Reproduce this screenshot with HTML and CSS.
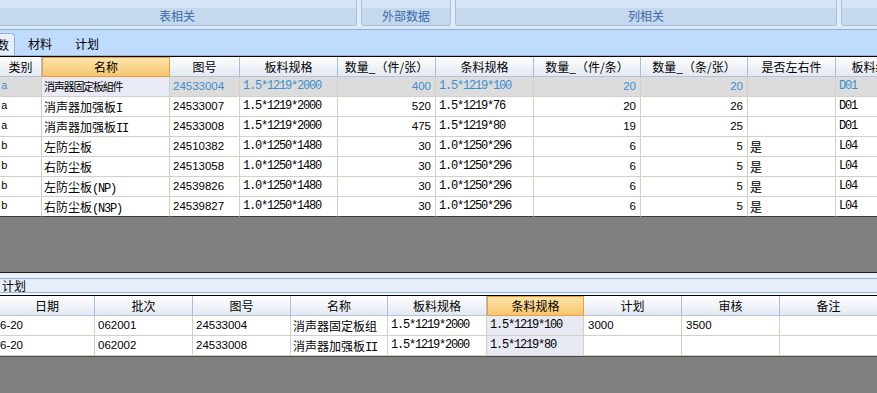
FILE: index.html
```html
<!DOCTYPE html>
<html>
<head>
<meta charset="utf-8">
<link rel="stylesheet" href="styles.css">
</head>
<body>
<div class="ribbon">
  <div class="group g1">表相关</div>
  <div class="group g2">外部数据</div>
  <div class="group g3">列相关</div>
  <div class="group g4"></div>
</div>
<div class="ribbon-foot"></div>
<div class="tabs">
  <div class="tab active"><span>数</span></div>
  <div class="tab t2">材料</div>
  <div class="tab t3">计划</div>
</div>

<div class="grid1">
  <div class="row r1 head">
    <div class="c">类别</div><div class="c sel">名称</div><div class="c">图号</div><div class="c">板料规格</div><div class="c">数量_（件/张）</div><div class="c">条料规格</div><div class="c">数量_（件/条）</div><div class="c">数量_（条/张）</div><div class="c">是否左右件</div><div class="c">板料编号</div>
  </div>
  <div class="row r1 body cur">
    <div class="c m k">a</div><div class="c nm focus">消声器固定板組件</div><div class="c n">24533004</div><div class="c m">1.5*1219*2000</div><div class="c n r">400</div><div class="c m">1.5*1219*100</div><div class="c n r">20</div><div class="c n r">20</div><div class="c"></div><div class="c m d">D01</div>
  </div>
  <div class="row r1 body">
    <div class="c m k">a</div><div class="c nm">消声器加强板<span class="m">I</span></div><div class="c n">24533007</div><div class="c m">1.5*1219*2000</div><div class="c n r">520</div><div class="c m">1.5*1219*76</div><div class="c n r">20</div><div class="c n r">26</div><div class="c"></div><div class="c m d">D01</div>
  </div>
  <div class="row r1 body">
    <div class="c m k">a</div><div class="c nm">消声器加强板<span class="m">II</span></div><div class="c n">24533008</div><div class="c m">1.5*1219*2000</div><div class="c n r">475</div><div class="c m">1.5*1219*80</div><div class="c n r">19</div><div class="c n r">25</div><div class="c"></div><div class="c m d">D01</div>
  </div>
  <div class="row r1 body">
    <div class="c m k">b</div><div class="c nm">左防尘板</div><div class="c n">24510382</div><div class="c m">1.0*1250*1480</div><div class="c n r">30</div><div class="c m">1.0*1250*296</div><div class="c n r">6</div><div class="c n r">5</div><div class="c nm">是</div><div class="c m d">L04</div>
  </div>
  <div class="row r1 body">
    <div class="c m k">b</div><div class="c nm">右防尘板</div><div class="c n">24513058</div><div class="c m">1.0*1250*1480</div><div class="c n r">30</div><div class="c m">1.0*1250*296</div><div class="c n r">6</div><div class="c n r">5</div><div class="c nm">是</div><div class="c m d">L04</div>
  </div>
  <div class="row r1 body">
    <div class="c m k">b</div><div class="c nm">左防尘板<span class="m">(NP)</span></div><div class="c n">24539826</div><div class="c m">1.0*1250*1480</div><div class="c n r">30</div><div class="c m">1.0*1250*296</div><div class="c n r">6</div><div class="c n r">5</div><div class="c nm">是</div><div class="c m d">L04</div>
  </div>
  <div class="row r1 body last">
    <div class="c m k">b</div><div class="c nm">右防尘板<span class="m">(N3P)</span></div><div class="c n">24539827</div><div class="c m">1.0*1250*1480</div><div class="c n r">30</div><div class="c m">1.0*1250*296</div><div class="c n r">6</div><div class="c n r">5</div><div class="c nm">是</div><div class="c m d">L04</div>
  </div>
</div>

<div class="gap"></div>

<div class="panel2">
  <div class="cap-top"></div>
  <div class="cap">计划</div>
  <div class="cap-bot"></div>
  <div class="grid2">
    <div class="row r2 head">
      <div class="c">日期</div><div class="c">批次</div><div class="c">图号</div><div class="c">名称</div><div class="c">板料规格</div><div class="c sel">条料规格</div><div class="c">计划</div><div class="c">审核</div><div class="c">备注</div>
    </div>
    <div class="row r2 body">
      <div class="c n p0">6-20</div><div class="c n">062001</div><div class="c n">24533004</div><div class="c nm">消声器固定板组</div><div class="c m">1.5*1219*2000</div><div class="c m col">1.5*1219*100</div><div class="c n p4">3000</div><div class="c n p4">3500</div><div class="c"></div>
    </div>
    <div class="row r2 body">
      <div class="c n p0">6-20</div><div class="c n">062002</div><div class="c n">24533008</div><div class="c nm">消声器加强板<span class="m">II</span></div><div class="c m">1.5*1219*2000</div><div class="c m col">1.5*1219*80</div><div class="c"></div><div class="c"></div><div class="c"></div>
    </div>
  </div>
</div>
</body>
</html>
```

FILE: styles.css
```css
html, body {
  margin: 0;
  padding: 0;
}
body {
  width: 877px;
  height: 393px;
  overflow: hidden;
  background: #808080;
  font-family: "Noto Sans CJK SC", sans-serif;
  font-size: 12px;
  color: #000;
}

/* ribbon */
.ribbon {
  display: flex;
  gap: 4px;
  height: 26px;
  margin-left: -3px;
  background: #e2ecf8;
}
.group {
  box-sizing: border-box;
  height: 26px;
  border: 1px solid #a7c0df;
  border-top: none;
  border-radius: 0 0 3px 3px;
  background: linear-gradient(#d6e5f5 0, #d6e5f5 8px, #c4d8ee 8px);
  color: #3f69a9;
  text-align: center;
  padding-top: 7px;
  line-height: 17px;
  flex: none;
}
.g1 { width: 360px; }
.g2 { width: 90px; }
.g3 { width: 382px; }
.g4 { width: 60px; }

.ribbon-foot {
  height: 3px;
  background: #dde9f6;
  border-bottom: 1px solid #8db0da;
}

/* tabs */
.tabs {
  height: 25px;
  background: #bfdbfe;
  border-bottom: 1px solid #94b4dc;
  display: flex;
  align-items: flex-end;
}
.tab {
  height: 22px;
  line-height: 21px;
  flex: none;
}
.tab.active {
  box-sizing: border-box;
  width: 15px;
  background: #e6effb;
  border: 1px solid #8fb1da;
  border-left: none;
  border-bottom: none;
  border-radius: 0 4px 0 0;
  overflow: hidden;
}
.tab.active span {
  display: block;
  margin-left: -3px;
  white-space: nowrap;
}
.t2 { margin-left: 13px; }
.t3 { margin-left: 23px; }

/* grids */
.grid1 {
  border-top: 1px solid #000;
  overflow: hidden;
  background: #fff;
}
.row {
  display: grid;
  height: 20px;
}
.r1 {
  grid-template-columns: 42px 128px 70px 98px 98px 98px 107px 107px 88px 80px;
}
.r2 {
  grid-template-columns: 95px 98px 98px 97px 99px 97px 98px 98px 98px;
}
.c {
  box-sizing: border-box;
  height: 20px;
  border-right: 1px solid #d4d0c8;
  border-bottom: 1px solid #d4d0c8;
  line-height: 19px;
  white-space: nowrap;
  overflow: hidden;
  padding: 0 2px;
}
.head .c {
  background: linear-gradient(#fefefe, #e3e9f2);
  border-right-color: #a8bfda;
  border-bottom-color: #b3c4d9;
  text-align: center;
  padding: 0;
}
.head .c.sel {
  background: linear-gradient(#fde4aa, #f6c66f);
  border: 1px solid #f19a3e;
  line-height: 18px;
}
.body .c { background: #fff; }
.n {
  font-family: "Liberation Sans", sans-serif;
  font-size: 11.5px;
  padding-left: 3px;
}
.m {
  font-family: "Liberation Mono", monospace;
  font-size: 12px;
  letter-spacing: -1.2px;
}
.c.m { padding-left: 3px; }
.k { padding-left: 1px !important; font-size: 11px; letter-spacing: 0; }
.d { padding-left: 3px; }
.r {
  text-align: right;
  padding-right: 4px;
}
.nm { padding-left: 2px; }
.cur .c {
  background: #dcdcdc;
  color: #3a8fd1;
}
.cur .c.focus {
  background: #e8ebf5;
  color: #000;
  font-size: 11px;
  letter-spacing: -1.2px;
}
.last .c { border-bottom-color: #3a3a3a; }

.gap { height: 55px; }

/* panel 2 */
.panel2 {
  border-top: 1px solid #1e1e1e;
}
.cap-top {
  height: 5px;
  background: #eaf1fa;
}
.cap {
  height: 13px;
  line-height: 13px;
  border-top: 1px solid #8db2e3;
  border-bottom: 1px solid #8db2e3;
  background: #e6eef9;
  padding-left: 2px;
}
.cap-bot {
  height: 2px;
  background: #f4f7fc;
}
.grid2 {
  border-top: 1px solid #000;
  border-bottom: 1px solid #4a4a4a;
  overflow: hidden;
  background: #fff;
}
.body .c.col { background: #e7e9f3; }
.p0 { padding-left: 0; }
.p4 { padding-left: 4px; }
```
